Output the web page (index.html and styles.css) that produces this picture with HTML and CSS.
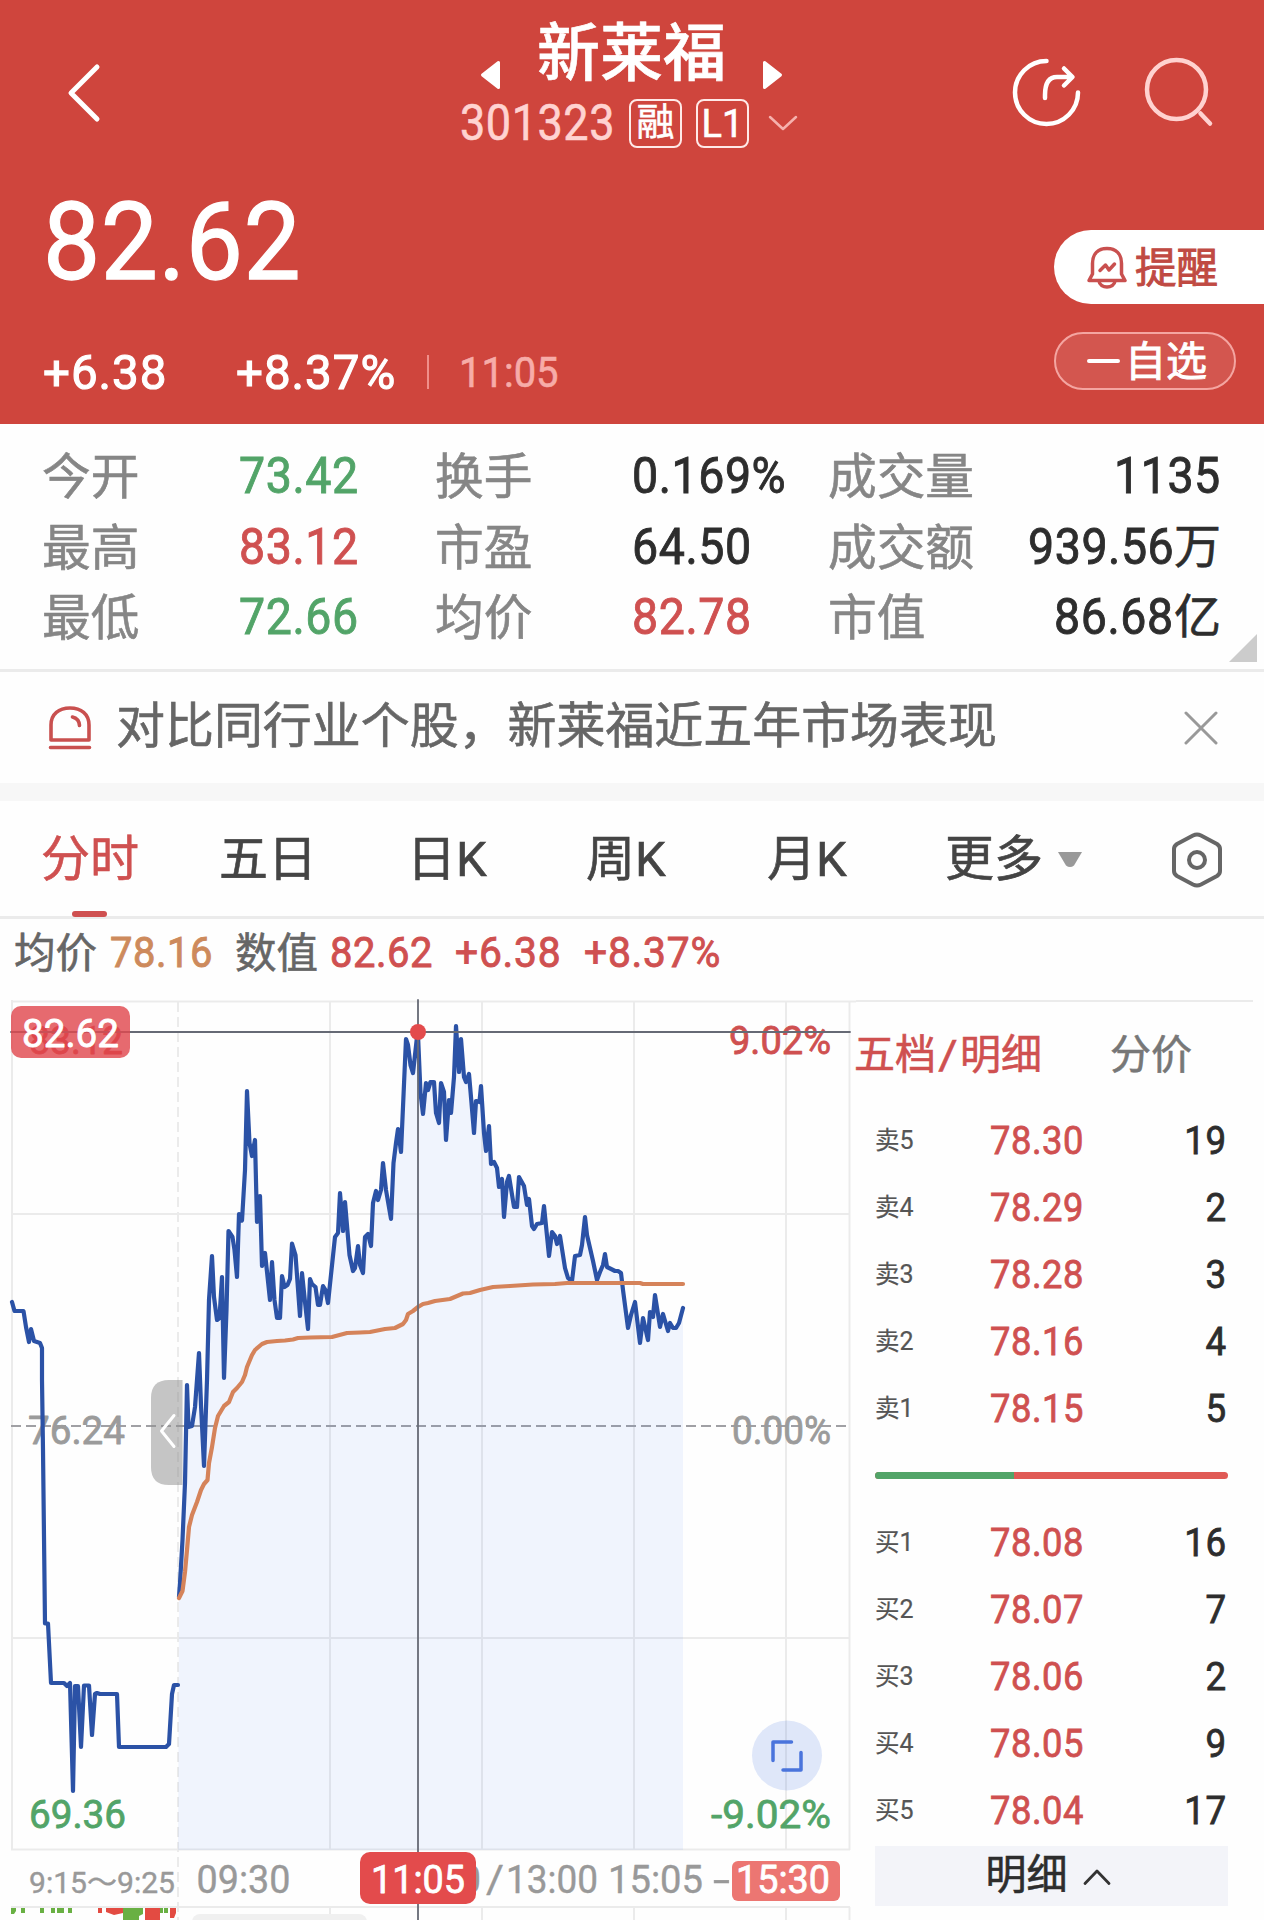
FILE: index.html
```html
<!DOCTYPE html>
<html lang="zh-CN">
<head>
<meta charset="utf-8">
<title>新莱福 301323</title>
<link rel="stylesheet" href="styles.css">
</head>
<body>
<header class="hero">
  <div class="topbar">
    <svg class="back" width="36" height="60" viewBox="0 0 36 60"><path d="M31 4 5 30 31 56"/></svg>
    <div class="title">
      <div class="title-row">
        <svg width="22" height="30" viewBox="0 0 22 30"><path class="tri" d="M3.500 15 19.500 2.500V27.500Z"/></svg>
        <h1>新莱福</h1>
        <svg width="22" height="30" viewBox="0 0 22 30"><path class="tri" d="M18.500 15 2.500 2.500V27.500Z"/></svg>
      </div>
      <div class="code-row">
        <span class="code num">301323</span>
        <span class="badge">融</span>
        <span class="badge badge-l1">L1</span>
        <svg class="chev" width="32" height="18" viewBox="0 0 32 18"><path d="M3 3 16 15 29 3"/></svg>
      </div>
    </div>
    <div class="actions">
      <svg width="72" height="72" viewBox="0 0 72 72"><g class="share"><path d="M35.500 5A31.500 31.500 0 1 0 67 36.500"/><path d="M34 42V39Q34 21 46 21H61M53 12.500 61.500 21 53 29.500"/></g></svg>
      <svg width="72" height="72" viewBox="0 0 72 72"><g class="search"><circle cx="32.500" cy="33.500" r="29.500"/><path d="M56.500 57.500 66 67.500"/></g></svg>
    </div>
  </div>
  <div class="quote">
    <div class="quote-main">
      <div class="price num">82.62</div>
      <div class="change">
        <span class="num chg">+6.38</span>
        <span class="num pct">+8.37%</span>
        <i class="sep"></i>
        <span class="num time">11:05</span>
      </div>
    </div>
    <div class="quote-side">
      <div class="remind">
        <svg width="42" height="44" viewBox="0 0 42 44"><g class="bell"><path d="M6.500 29V18.500C6.500 9 12 3.500 21 3.500S35.500 9 35.500 18.500V29L39 35.500H3Z"/><path d="M13 36C14 44 28 44 29 36"/><path d="M14 25.500 19.500 20 23 25 28.500 19"/></g></svg>
        <span>提醒</span>
      </div>
      <div class="fav"><i></i><span>自选</span></div>
    </div>
  </div>
</header>

<section class="stats">
  <span class="lab">今开</span><span class="val"><b class="num up-no">73.42</b></span>
  <span class="lab">换手</span><span class="val"><b class="num">0.169%</b></span>
  <span class="lab">成交量</span><span class="val end"><b class="num">1135</b></span>
  <span class="lab">最高</span><span class="val"><b class="num red">83.12</b></span>
  <span class="lab">市盈</span><span class="val"><b class="num">64.50</b></span>
  <span class="lab">成交额</span><span class="val end"><b class="num">939.56</b><em>万</em></span>
  <span class="lab">最低</span><span class="val"><b class="num up-no">72.66</b></span>
  <span class="lab">均价</span><span class="val"><b class="num red">82.78</b></span>
  <span class="lab">市值</span><span class="val end"><b class="num">86.68</b><em>亿</em></span>
  <i class="corner"></i>
</section>

<section class="notice">
  <svg width="44" height="46" viewBox="0 0 44 46"><g class="siren"><path d="M3 35V20C3 9 11 3 22 3S41 9 41 20V35ZM2.500 42.500H41.500M24.500 12Q31 13.500 31.500 20.500"/></g></svg>
  <p>对比同行业个股，新莱福近五年市场表现</p>
  <svg width="34" height="34" viewBox="0 0 34 34"><path class="close" d="M2 2 32 32M32 2 2 32"/></svg>
</section>

<nav class="tabs">
  <span class="tab on">分时</span>
  <span class="tab">五日</span>
  <span class="tab">日K</span>
  <span class="tab">周K</span>
  <span class="tab">月K</span>
  <span class="tab">更多</span>
  <svg class="more" width="26" height="18" viewBox="0 0 26 18"><path d="M1 1H25L17 14.500Q13 17.500 9 14.500Z"/></svg>
  <svg class="gear" width="52" height="58" viewBox="0 0 52 58"><path d="M22 4.500Q26 2.500 30 4.500L46 13Q49 15 49 18V40Q49 43 46 45L30 53.500Q26 55.500 22 53.500L6 45Q3 43 3 40V18Q3 15 6 13Z"/><circle cx="26" cy="29" r="8"/></svg>
</nav>

<div class="readout">
  <span class="k">均价</span><span class="num avg">78.16</span>
  <span class="k k2">数值</span><span class="num r1">82.62</span>
  <span class="num r2">+6.38</span><span class="num r3">+8.37%</span>
</div>

<main class="board">
  <svg class="chart" width="856" height="924" viewBox="0 996 856 924">
    <g class="grid">
      <path d="M11 1001.500H856M12 1000V1850M330 1001V1850M482 1001V1850M634 1001V1850M786 1001V1850M849.500 1001V1850M12 1214H850M12 1638H850M11 1849.500H850M11 1907H850M330 1907V1920M482 1907V1920M634 1907V1920M786 1907V1920M849.500 1907V1920"/>
      <path class="dash" d="M178 1002V1920"/>
    </g>
    <path class="zero" d="M11 1426H850"/>
    <g class="t faint"><text x="29" y="1054" textLength="94" lengthAdjust="spacingAndGlyphs">83.12</text></g>
    <g class="t red"><text x="729" y="1054" textLength="102" lengthAdjust="spacingAndGlyphs">9.02%</text></g>
    <g class="t gray">
      <text x="28" y="1443.500" textLength="97" lengthAdjust="spacingAndGlyphs">76.24</text>
      <text x="732" y="1443.500" textLength="99" lengthAdjust="spacingAndGlyphs">0.00%</text>
    </g>
    <g class="t green">
      <text x="29" y="1828" textLength="97" lengthAdjust="spacingAndGlyphs">69.36</text>
      <text x="711" y="1828" textLength="120" lengthAdjust="spacingAndGlyphs">-9.02%</text>
    </g>
    <path class="handle" d="M182.500 1380H169Q151 1380 151 1398V1467Q151 1485 169 1485H182.500Z"/>
    <path class="handle-arrow" d="M174 1415.500 161.500 1431 174 1446.500"/>
    <polygon class="area" points="178,1850 179,1597 185,1483 187,1385 188.500,1427 192,1427 199,1353 204,1466 207,1380 209,1300 212,1256 214,1297 217,1320 219.500,1318 222,1277 224,1378 226.500,1310 228.500,1231 232.500,1237 237,1277 239,1214 242,1220 245,1170 247,1091 249.500,1143 252,1156 255,1140 257,1222 260,1196 262,1266 265,1253 270,1300 272,1262 277,1318 280,1318 282,1276 290,1279 292,1243 295,1255 300,1316 302,1273 308,1329 310,1279 315,1287 320,1305 323,1286 328,1303 335,1237 338,1233 340,1193 343,1231 345,1202 349,1255 353,1271 358,1246 363,1273 365,1237 368,1234 371,1246 373,1203 376,1191 381,1190 383,1163 386,1190 391,1219 393,1163 398,1129 401,1152 406,1039 413,1073 417,1037 423,1114 426,1083 434,1082 439,1123 441,1083 446,1140 449,1100 451,1113 456,1026 459,1072 461,1039 466,1082 469,1074 474,1133 476,1101 481,1086 486,1151 489,1126 491,1164 497,1168 504,1217 509,1176 514,1207 517,1207 519,1177 524,1186 532,1226 542,1223 544,1206 549,1256 552,1232 557,1244 560,1236 568,1278 572,1282 575,1256 580,1255 585,1217 597,1280 605,1254 607,1267 621,1273 628,1328 635,1302 640,1343 643,1318 648,1340 650,1312 655,1295 660,1327 663,1314 668,1331 676,1328 683,1308 683,1850"/>
    <polyline class="line" points="12,1302 14.500,1311 23.500,1311 26,1327 29,1342 31,1329 34,1341 40,1343 42,1348 42,1380 43,1450 45,1623.500 48,1623.500 51,1683 64,1683 67,1686 70,1683 73,1791 75,1686 78,1686 81,1747 84,1685.500 89,1685.500 92,1735 95,1694 97,1693 100,1694 117,1694 119,1747 166,1747 169,1744 172,1694 174,1685 178,1685"/>
    <polyline class="line" points="179,1597 180,1583 182.500,1540 185,1483 187,1385 188.500,1427 192,1426 195,1407 199,1353 201,1405 204,1466 207,1380 209,1300 212,1256 214,1297 217,1320 219.500,1318 222,1277 224,1378 226.500,1310 228.500,1231 232.500,1237 234.500,1250 237,1277 239,1214 242,1220.500 245,1170 247,1091 249.500,1143 252,1156 255,1140 257,1222 260,1196 262,1266 265,1253 270,1300 272,1262 274.500,1300 277,1318 280,1318 282,1276 284.500,1287 287.500,1285 290,1279 292,1243.500 295.500,1255 300,1316 302,1273 305,1302 308,1329 310,1279 312,1284 315.500,1287 318,1305 320,1305 323,1286 325.500,1290 328,1303 335,1237 338,1233 340,1193 343,1231 345,1202 349.500,1255 353,1271 355,1268 358,1246 360,1265 363,1273 365,1237 368,1234 371,1246 373,1203 376,1191 378,1200 381,1190 383,1163 386,1190 391,1219 393.500,1163 396,1143 398,1129 401,1152 406,1039 408,1045 410.500,1065 413,1073 417,1037 418,1035 420.500,1093 423,1114 426,1083 428,1090 430.500,1082 434,1082 436,1113 439,1123 441,1083 444,1092 446,1140 449,1100 451,1113 454,1077 456,1026 459,1072 461,1039 464,1077 466,1082 469,1074 471.500,1103 474,1133 476,1101 479.500,1102 481,1086 484,1133 486,1151 489,1126 491,1164 494,1162 497,1168 499,1187 502,1179 504,1217 507,1182 509,1176 514,1207 517,1207 519,1177 524,1186 527,1205 529,1199 532,1226 534,1229 537,1224 542,1223 544,1206 549,1256 552,1232 555,1236 557,1244 560,1236 565,1268 568,1278 572,1281 575,1256 580,1255 582,1245 585,1217 587,1235 593,1261 597,1280 600,1272 603,1265 605,1254 607,1267 615,1271 618,1271 621,1273 623,1290 628,1328 631,1315 635,1302 640,1343 643,1318 648,1340 650,1312 653,1317 655,1295 660,1327 663,1314 668,1331 670,1323 673,1328 676,1328 679,1323 683,1308"/>
    <polyline class="mean" points="179,1598 182.500,1591 185,1572 187,1550 189,1527 192,1515 197,1502 201,1490 204,1484 207.500,1480 209,1463 212,1447 215,1428 218,1416 224,1406 229,1402 233,1392 237,1388 242,1382 245,1375 247,1367 252,1355 255,1350 262,1344 267,1342 277,1341 285,1340.500 293,1339.500 298,1338 310,1337.500 332,1337 347,1333 360,1332.500 370,1332 385,1329 395,1328 403,1324 406,1320 408,1314 413,1311 418,1307 423,1304 428,1303 435,1301 450,1299 463,1293.500 470,1293 480,1290 493,1287 510,1286 533,1284.500 555,1284 567,1283 640,1283 643,1284 683,1284"/>
    <path class="cross" d="M11 1032H850M418 1000V1920"/>
    <circle class="dot" cx="418" cy="1032" r="8"/>
    <rect class="tag-price" x="11" y="1006" width="119" height="52" rx="10"/>
    <g class="t white"><text x="22" y="1047" textLength="97" lengthAdjust="spacingAndGlyphs">82.62</text></g>
    <circle class="expand-bg" cx="787" cy="1755.500" r="35"/>
    <path class="expand" d="M791.500 1742H773V1760.500M801 1752.500V1770H783"/>
    <g class="t axis">
      <text class="sm" x="29" y="1893" textLength="146" lengthAdjust="spacingAndGlyphs">9:15～9:25</text>
      <text x="196.500" y="1893" textLength="94" lengthAdjust="spacingAndGlyphs">09:30</text>
      <text x="388" y="1893" textLength="93" lengthAdjust="spacingAndGlyphs">11:30</text>
      <text x="486" y="1893" textLength="18" lengthAdjust="spacingAndGlyphs">/</text>
      <text x="506" y="1893" textLength="92" lengthAdjust="spacingAndGlyphs">13:00</text>
      <text x="608" y="1893" textLength="95" lengthAdjust="spacingAndGlyphs">15:05</text>
      <text x="713" y="1893" textLength="17" lengthAdjust="spacingAndGlyphs">-</text>
    </g>
    <rect class="tag-now" x="360" y="1852" width="116" height="52" rx="10"/>
    <rect class="tag-end" x="732" y="1861" width="108" height="40" rx="6"/>
    <g class="t white">
      <text x="371" y="1893" textLength="94" lengthAdjust="spacingAndGlyphs">11:05</text>
      <text x="736" y="1893" textLength="94" lengthAdjust="spacingAndGlyphs">15:30</text>
    </g>
    <path class="vg" d="M11 1908H16V1911L14 1914H11ZM21 1908H25V1913H21ZM40 1908H44V1913H40ZM51 1908H55V1913H51ZM57 1908H64V1913H57ZM68 1908H72V1913H68ZM123 1908H143V1914L139 1916V1920H123ZM159 1908H163V1913H159ZM164 1908H168V1913H164Z"/>
    <path class="vr" d="M98 1908H102V1913H98ZM106 1908H123V1913L114 1915 106 1912ZM145 1908H160V1920H145ZM170 1908H176V1913L174 1918H170Z"/>
    <rect class="peek" x="192" y="1914" width="175" height="20" rx="8"/>
  </svg>

  <aside class="book">
    <div class="book-head"><span class="red">五档<i class="slash">/</i>明细</span><span class="dim">分价</span></div>
    <div class="row"><span>卖<i>5</i></span><b class="num">78.30</b><em class="num">19</em></div>
    <div class="row"><span>卖<i>4</i></span><b class="num">78.29</b><em class="num">2</em></div>
    <div class="row"><span>卖<i>3</i></span><b class="num">78.28</b><em class="num">3</em></div>
    <div class="row"><span>卖<i>2</i></span><b class="num">78.16</b><em class="num">4</em></div>
    <div class="row"><span>卖<i>1</i></span><b class="num">78.15</b><em class="num">5</em></div>
    <div class="ratio"><i></i></div>
    <div class="row"><span>买<i>1</i></span><b class="num">78.08</b><em class="num">16</em></div>
    <div class="row"><span>买<i>2</i></span><b class="num">78.07</b><em class="num">7</em></div>
    <div class="row"><span>买<i>3</i></span><b class="num">78.06</b><em class="num">2</em></div>
    <div class="row"><span>买<i>4</i></span><b class="num">78.05</b><em class="num">9</em></div>
    <div class="row"><span>买<i>5</i></span><b class="num">78.04</b><em class="num">17</em></div>
    <div class="detail"><span>明细</span><svg width="28" height="18" viewBox="0 0 28 18"><path d="M2 15.500 14 3 26 15.500"/></svg></div>
  </aside>
</main>
</body>
</html>
```
FILE: styles.css
```css
* { box-sizing: border-box; }
body {
  margin: 0;
  width: 1264px;
  height: 1920px;
  overflow: hidden;
  background: #fefefe;
  color: #2d2d2d;
  font-family: Roboto, "Noto Sans CJK SC", sans-serif;
  -webkit-text-stroke: .6px currentColor;
}
i, em { font-style: normal; }
b { font-weight: 400; }
svg { display: block; flex: none; fill: none; stroke-linecap: round; stroke-linejoin: round; }
.num {
  display: inline-block;
  font-weight: 400;
  letter-spacing: .6px;
  transform: scaleX(.93);
  transform-origin: left center;
  white-space: nowrap;
}
.red { color: #cf5050; }
.up-no { color: #52a468; }

/* header */
.hero { height: 424px; background: #cf453d; color: #fff; }
.topbar { height: 180px; display: flex; padding-left: 66px; }
.back { margin-top: 63px; stroke: #fff; stroke-width: 5; }
.title { width: 360px; margin-left: 358px; padding-top: 15px; }
.title-row { display: flex; align-items: center; height: 77px; padding-left: 19px; }
.title-row svg { margin-top: 42px; }
.title-row h1 { margin: 0 36px 0 36px; font-size: 63px; font-weight: 500; line-height: 80px; width: 189px; white-space: nowrap; }
.tri { fill: #fff; stroke: #fff; stroke-width: 3; }
.code-row { display: flex; align-items: center; height: 62px; }
.code { width: 169px; font-size: 50px; color: #ffd3d1; transform: scaleX(.9); }
.badge {
  width: 53px; height: 49px; border: 2px solid #ffe9e8; border-radius: 8px;
  font-size: 38px; line-height: 43px; text-align: center; margin-right: 14px; overflow: hidden;
}
.badge-l1 { font-size: 38px; line-height: 47px; }
.chev { margin-left: 4px; stroke: #f6b1ad; stroke-width: 2.5; }
.actions { display: flex; gap: 61px; padding: 56px 0 0 191px; }
.actions svg { stroke-width: 4.500; }
.share { stroke: #fff; }
.search { stroke: #ffd2d0; }

.quote { display: flex; justify-content: space-between; height: 244px; }
.quote-main { padding: 3px 0 0 43px; }
.price { font-size: 107px; line-height: 120px; transform: scaleX(.95); -webkit-text-stroke-width: 1.300px; }
.change { display: flex; align-items: center; margin-top: 44px; height: 50px; }
.chg { width: 193px; font-size: 49px; }
.pct { width: 191px; font-size: 49px; }
.chg, .pct { transform: scaleX(.97); letter-spacing: 1px; -webkit-text-stroke-width: 1.100px; }
.sep { width: 2px; height: 34px; background: #f08f8a; }
.time { margin-left: 30px; font-size: 43px; letter-spacing: 0; color: #f7aca8; }
.quote-side { width: 210px; padding-top: 50px; }
.remind {
  height: 74px; display: flex; align-items: center; gap: 7px; padding-left: 32px;
  background: #fff; border-radius: 37px 0 0 37px; color: #c04a43; font-size: 41.500px;
}
.remind span { position: relative; top: -2px; }
.remind span, .fav span { -webkit-text-stroke-width: .9px; }
.bell { stroke: #c9504f; stroke-width: 3.500; }
.fav {
  width: 182px; height: 58px; margin-top: 28px; display: flex; align-items: center; padding-left: 31px;
  border: 2px solid #f4a5a1; border-radius: 29px; background: #d3564f; font-size: 41px;
}
.fav i { width: 33px; height: 4px; border-radius: 2px; background: #fff; margin-right: 5px; }
.fav span { position: relative; top: -3px; white-space: nowrap; }

/* summary figures */
.stats {
  position: relative; height: 248px; padding: 17px 43px 0 42px; border-bottom: 3px solid #ebebeb;
  display: grid; grid-template-columns: 197px 196px 197px 196px 161px 1fr; grid-auto-rows: 70.500px;
  line-height: 70px; font-size: 48.700px;
}
.lab { color: #868686; padding-top: 2px; }
.val { white-space: nowrap; font-size: 50px; display: flex; }
.val .num { -webkit-text-stroke-width: .9px; }
.end { justify-content: flex-end; }
.end .num { transform-origin: right center; }
.val em { font-size: 47px; line-height: 69px; }
.corner { position: absolute; right: 7px; bottom: 7px; border-left: 28px solid transparent; border-bottom: 28px solid #ccc; }

.notice { height: 129px; display: flex; align-items: center; padding: 0 46px 0 48px; border-bottom: 18px solid #f7f7f7; }
.notice p { margin: 0 0 1px 24px; flex: 1; font-size: 48.950px; line-height: 60px; color: #666; white-space: nowrap; }
.siren { stroke: #c9504f; stroke-width: 3.600; }
.close { stroke: #999; stroke-width: 3; }

/* tabs */
.tabs { height: 118px; display: grid; grid-template-columns: 178px 188px 179px 181px 178px 112px 114px auto; align-items: center; padding-left: 41px; border-bottom: 3px solid #ebebeb; font-size: 49px; color: #444; }
.tab { position: relative; height: 115px; line-height: 118px; white-space: nowrap; }
.on { color: #cf5050; }
.on::after { content: ""; position: absolute; left: 31px; bottom: -1px; width: 35px; height: 6px; border-radius: 3px; background: #cf5050; }
.more { fill: #999; margin-top: 3px; }
.gear { stroke: #666; stroke-width: 4; margin-top: 2px; }

.readout { height: 77px; display: flex; align-items: center; padding: 0 0 11px 14px; font-size: 42px; }
.k { color: #666; width: 96px; font-size: 41.500px; position: relative; top: -2px; }
.k2 { width: 95px; }
.readout .num { transform: scaleX(.95); -webkit-text-stroke-width: .9px; }
.avg { color: #cd8a5c; width: 125px; }
.r1, .r2, .r3 { color: #cf5050; }
.r1 { width: 125px; }
.r2 { width: 129px; }
.readout .r2, .readout .r3 { transform: scaleX(.97); letter-spacing: .8px; }

/* chart */
.board { display: flex; height: 924px; }
.grid { stroke: #ebebeb; stroke-width: 2; stroke-linecap: butt; }
.dash { stroke-dasharray: 10 5; }
.zero { stroke: #a0a0a4; stroke-width: 2; stroke-dasharray: 10 5; stroke-linecap: butt; }
.area { fill: #3f7ff0; fill-opacity: .075; }
.line { stroke: #2b52a6; stroke-width: 4.200; }
.mean { stroke: #d5835a; stroke-width: 4.200; }
.cross { stroke: #666a75; stroke-width: 1.800; }
.dot { fill: #e34b4c; }
.t { font-family: Roboto, "Noto Sans CJK SC", sans-serif; font-size: 39.500px; font-weight: 400; -webkit-text-stroke: 0; stroke-width: .8; }
.t.red { fill: #cf5050; stroke: #cf5050; }
.gray { fill: #9b9b9b; stroke: #9b9b9b; }
.faint { fill: #d33a3a; stroke: #d33a3a; }
.green { fill: #52a468; stroke: #52a468; }
.white { fill: #fff; stroke: #fff; }
.axis { fill: #999; stroke: #999; stroke-width: .4; }
.sm { font-size: 29px; }
.handle { fill: #909090; fill-opacity: .52; }
.handle-arrow { stroke: #fff; stroke-width: 3; }
.tag-price { fill: #e0494f; fill-opacity: .82; }
.tag-now { fill: #e34b4c; }
.tag-end { fill: #ec7672; }
.expand-bg { fill: #3d6de0; fill-opacity: .16; }
.expand { stroke: #4a74dc; stroke-width: 3.500; }
.vg { fill: #69b043; }
.vr { fill: #e34b42; }
.peek { fill: #f0f0f0; }

/* order book */
.book { flex: none; width: 397px; margin-top: 4px; border-top: 2px solid #ebebeb; padding: 23px 0 0; height: 920px; font-size: 39.500px; }
.book-head { height: 82px; display: flex; gap: 68px; margin-left: -2px; font-size: 41px; line-height: 61px; white-space: nowrap; }
.slash { display: inline-block; width: 24px; text-align: center; transform: scaleX(1.15); }
.dim { color: #777; }
.row { display: grid; grid-template-columns: 115px 1fr auto; height: 67px; line-height: 68px; padding: 0 26px 0 19px; }
.row span { font-size: 24.500px; color: #555; -webkit-text-stroke-width: .2px; }
.row span i { font-size: 25px; }
.row .num { -webkit-text-stroke-width: .8px; }
.row b { color: #cf5050; transform: scaleX(.92); }
.row em { transform-origin: right center; }
.ratio { height: 7px; margin: 30px 25px 30px 19px; border-radius: 4px; background: #e05a55; overflow: hidden; }
.ratio i { display: block; width: 139px; height: 7px; background: #52a468; }
.detail { margin: 2px 25px 0 19px; height: 60px; background: #f3f4f9; display: flex; justify-content: center; align-items: center; gap: 15px; line-height: 56px; padding: 0 7px 2px 0; font-size: 41px; }
.detail svg { stroke: #333; stroke-width: 2.800; margin-top: 4px; }
```
